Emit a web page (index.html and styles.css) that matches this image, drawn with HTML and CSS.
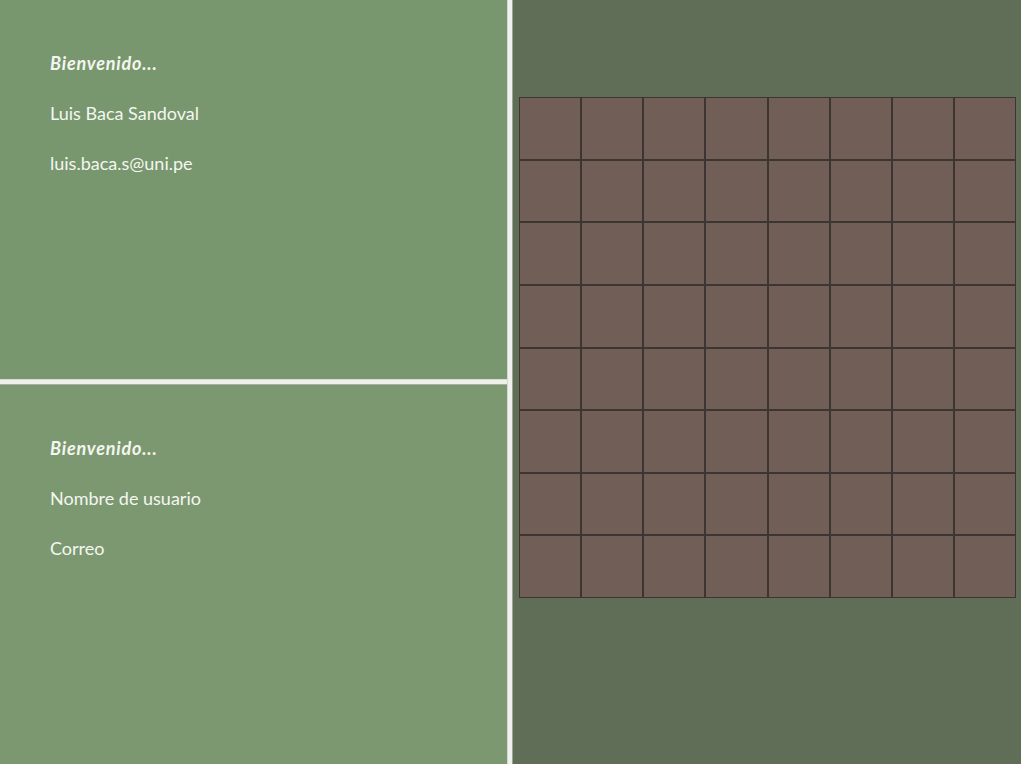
FILE: index.html
```html
<!DOCTYPE html>
<html lang="es">
<head>
<meta charset="utf-8">
<title>Tablero</title>
<link rel="stylesheet" href="styles.css">
</head>
<body>
<div class="app">
  <div class="left">
    <section class="panel panel-top">
      <p class="welcome">Bienvenido...</p>
      <p class="line">Luis Baca Sandoval</p>
      <p class="line">luis.baca.s@uni.pe</p>
    </section>
    <div class="hsplit"></div>
    <section class="panel panel-bottom">
      <p class="welcome">Bienvenido...</p>
      <p class="line">Nombre de usuario</p>
      <p class="line">Correo</p>
    </section>
  </div>
  <div class="vsplit"></div>
  <div class="right">
    <div class="board">
      <div class="cell"></div><div class="cell"></div><div class="cell"></div><div class="cell"></div><div class="cell"></div><div class="cell"></div><div class="cell"></div><div class="cell"></div>
      <div class="cell"></div><div class="cell"></div><div class="cell"></div><div class="cell"></div><div class="cell"></div><div class="cell"></div><div class="cell"></div><div class="cell"></div>
      <div class="cell"></div><div class="cell"></div><div class="cell"></div><div class="cell"></div><div class="cell"></div><div class="cell"></div><div class="cell"></div><div class="cell"></div>
      <div class="cell"></div><div class="cell"></div><div class="cell"></div><div class="cell"></div><div class="cell"></div><div class="cell"></div><div class="cell"></div><div class="cell"></div>
      <div class="cell"></div><div class="cell"></div><div class="cell"></div><div class="cell"></div><div class="cell"></div><div class="cell"></div><div class="cell"></div><div class="cell"></div>
      <div class="cell"></div><div class="cell"></div><div class="cell"></div><div class="cell"></div><div class="cell"></div><div class="cell"></div><div class="cell"></div><div class="cell"></div>
      <div class="cell"></div><div class="cell"></div><div class="cell"></div><div class="cell"></div><div class="cell"></div><div class="cell"></div><div class="cell"></div><div class="cell"></div>
      <div class="cell"></div><div class="cell"></div><div class="cell"></div><div class="cell"></div><div class="cell"></div><div class="cell"></div><div class="cell"></div><div class="cell"></div>
    </div>
  </div>
</div>
</body>
</html>
```
FILE: styles.css
```css
html, body {
  margin: 0;
  padding: 0;
  height: 100%;
  overflow: hidden;
}
body {
  font-family: Lato, "Open Sans", "Liberation Sans", sans-serif;
  color: #f4f6f0;
}
.app {
  display: flex;
  width: 1021px;
  height: 764px;
}
.left {
  width: 507px;
  display: flex;
  flex-direction: column;
}
.panel {
  padding: 53px 0 0 50px;
  box-sizing: border-box;
}
.panel-top {
  height: 379px;
  background: #78976e;
}
.panel-bottom {
  flex: 1;
  background: #7c9870;
}
.hsplit {
  height: 6px;
  background: #eef0ea;
  border-top: 1px solid #d8dad4;
  border-bottom: 1px solid #a9ada4;
  box-sizing: border-box;
}
.vsplit {
  width: 6px;
  background: #f0f1ee;
  border-left: 1px solid #d5d7d1;
  border-right: 1px solid #9ea39a;
  box-sizing: border-box;
}
.welcome, .line {
  margin: 0;
  height: 50px;
  line-height: 20px;
  font-size: 18px;
}
.welcome {
  font-weight: bold;
  font-style: italic;
  letter-spacing: 0.8px;
}
.right {
  flex: 1;
  background: #606e57;
  padding: 97px 0 0 6px;
}
.board {
  width: 497px;
  height: 501px;
  box-sizing: border-box;
  display: grid;
  grid-template-columns: repeat(8, 1fr);
  grid-template-rows: repeat(8, 1fr);
  gap: 2px;
  padding: 1px;
  background: #3d3531;
}
.cell {
  background: #715f57;
}
```
